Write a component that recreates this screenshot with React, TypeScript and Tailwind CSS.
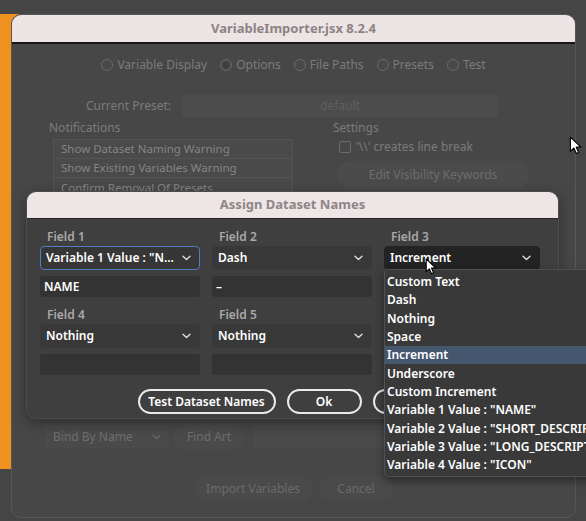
import React from "react";

const font = { fontFamily: '"Noto Sans", "Liberation Sans", sans-serif' };

function Chevron({ className = "" }: { className?: string }) {
  return (
    <svg width="9" height="6" viewBox="0 0 9 6" className={className}>
      <path d="M1 1.2 L4.5 4.6 L8 1.2" fill="none" stroke="currentColor" strokeWidth="1.4" strokeLinecap="round" strokeLinejoin="round" />
    </svg>
  );
}

function Radio({ label, checked }: { label: string; checked?: boolean }) {
  return (
    <div className="flex items-center gap-[4px]">
      <div className="w-[12px] h-[12px] rounded-full border border-[#6a6a6a] flex items-center justify-center bg-[#484848]">
        {checked && <div className="w-[6px] h-[6px] rounded-full bg-[#3c3c3c]" />}
      </div>
      <span>{label}</span>
    </div>
  );
}

function Cursor({ className = "", size = 18 }: { className?: string; size?: number }) {
  return (
    <svg width={size * 0.7} height={size} viewBox="0 0 12 18" className={className}>
      <path d="M1 1 L1 14.5 L4.3 11.4 L6.6 16.6 L8.8 15.6 L6.6 10.6 L11 10.6 Z" fill="#fff" stroke="#000" strokeWidth="1.1" strokeLinejoin="round" />
    </svg>
  );
}

function Field({
  label,
  value,
  input,
  variant,
}: {
  label: string;
  value: string;
  input: string;
  variant: "focus" | "normal" | "open";
}) {
  const selectCls =
    variant === "focus"
      ? "bg-[#363636] border-[1.5px] border-[#4d7fc2]"
      : variant === "open"
      ? "bg-[#232323] border border-[#232323]"
      : "bg-[#383838] border border-[#3a3a3a]";
  return (
    <div className="flex flex-col">
      <div className="h-[18px] flex items-center pl-[7px] text-[12px] font-semibold text-[#a9a9a9]">{label}</div>
      <div className={`h-[24px] rounded-[4px] flex items-center justify-between pl-[5px] pr-[8px] text-[12px] font-semibold text-white ${selectCls}`}>
        <span className="whitespace-nowrap">{value}</span>
        <Chevron className="text-[#dcdcdc]" />
      </div>
      <div className="mt-[6px] h-[21px] rounded-[3px] bg-[#333333] flex items-center pl-[4px] text-[12px] font-semibold text-white">
        {input}
      </div>
    </div>
  );
}

export default function App() {
  const items = [
    "Custom Text",
    "Dash",
    "Nothing",
    "Space",
    "Increment",
    "Underscore",
    "Custom Increment",
    'Variable 1 Value : "NAME"',
    'Variable 2 Value : "SHORT_DESCRIPT',
    'Variable 3 Value : "LONG_DESCRIPT',
    'Variable 4 Value : "ICON"',
  ];
  return (
    <div className="relative w-[586px] h-[521px] overflow-hidden bg-[#454545]" style={font}>
      {/* orange window behind */}
      <div className="absolute left-0 top-[14px] w-[30px] h-[455px] bg-[#ef911f] rounded-tr-[6px]" />

      {/* main window */}
      <div className="absolute left-[11px] top-[14px] w-[565px] h-[504px] rounded-[10px] bg-[#474747] border border-[#575757] overflow-hidden flex flex-col text-[12px] text-[#7b7b7b]">
        <div className="h-[29px] shrink-0 bg-[#ece4e5] border-b-2 border-[#161616] flex items-center justify-center text-[13px] font-bold text-[#8d8384]">
          VariableImporter.jsx 8.2.4
        </div>
        <div className="mt-[11px] h-[20px] flex items-center justify-center gap-[13px] text-[12px]">
          <Radio label="Variable Display" />
          <Radio label="Options" checked />
          <Radio label="File Paths" />
          <Radio label="Presets" />
          <Radio label="Test" />
        </div>
        <div className="mt-[20px] h-[22px] flex items-center">
          <div className="w-[159px] text-right">Current Preset:</div>
          <div className="ml-[11px] w-[316px] h-[22px] rounded-[2px] bg-[#4c4c4c] flex items-center justify-center text-[#5f5f5f]">
            default
          </div>
        </div>
        <div className="mt-[3px] flex gap-[25px] pl-[28px]">
          <div className="w-[265px] flex flex-col">
            <div className="h-[16px] pl-[9px] flex items-center">Notifications</div>
            <div className="mt-[3px] ml-[13px] w-[240px] border border-[#535353] bg-[#4a4a4a] text-[#858585] text-[11.5px]">
              <div className="h-[19px] flex items-center pl-[7px] border-b border-[#545454]">Show Dataset Naming Warning</div>
              <div className="h-[19px] flex items-center pl-[7px] border-b border-[#545454]">Show Existing Variables Warning</div>
              <div className="h-[19px] flex items-center pl-[7px]">Confirm Removal Of Presets</div>
            </div>
          </div>
          <div className="w-[230px] flex flex-col">
            <div className="h-[16px] pl-[3px] flex items-center">Settings</div>
            <div className="mt-[3px] ml-[9px] flex items-center gap-[5px] h-[16px]">
              <div className="w-[12px] h-[12px] rounded-[2px] border border-[#6a6a6a]" />
              <span>'\\' creates line break</span>
            </div>
            <div className="mt-[6px] ml-[7px] w-[192px] h-[28px] rounded-full bg-[#4b4b4b] flex items-center justify-center text-[#6d6d6d]">
              Edit Visibility Keywords
            </div>
          </div>
        </div>
        <div className="flex-1" />
        <div className="pl-[37px] h-[14px] flex items-end">Auto Binding</div>
        <div className="mt-[6px] pl-[33px] flex items-center gap-[4px]">
          <div className="w-[124px] h-[24px] rounded-[4px] bg-[#4a4a4a] flex items-center justify-between pl-[8px] pr-[8px] text-[#6e6e6e]">
            <span>Bind By Name</span>
            <Chevron className="text-[#666]" />
          </div>
          <div className="w-[72px] h-[26px] rounded-full bg-[#4a4a4a] flex items-center justify-center text-[#6e6e6e]">Find Art</div>
          <div className="ml-[4px] w-[200px] h-[24px] rounded-[3px] bg-[#4a4a4a]" />
        </div>
        <div className="mt-[26px] mb-[16px] flex justify-center gap-[6px] text-[#6a6a6a]">
          <div className="w-[119px] h-[25px] rounded-full bg-[#4a4a4a] flex items-center justify-center">Import Variables</div>
          <div className="w-[75px] h-[25px] rounded-full bg-[#4a4a4a] flex items-center justify-center">Cancel</div>
        </div>
      </div>

      {/* dialog */}
      <div className="absolute left-[26px] top-[191px] w-[533px] h-[228px] rounded-[10px] bg-[#3f3f3f] border border-[#4c4c4c] overflow-hidden flex flex-col shadow-[0_4px_14px_rgba(0,0,0,0.35)]">
        <div className="h-[27px] shrink-0 bg-[#ede5e6] border-b border-[#262626] flex items-center justify-center text-[13px] font-bold text-[#8f8586]">
          Assign Dataset Names
        </div>
        <div className="pt-[9px] pl-[13px] grid grid-cols-[160px_160px_156px] gap-x-[12px] gap-y-[9px]">
          <Field label="Field 1" value={'Variable 1 Value : "N...'} input="NAME" variant="focus" />
          <Field label="Field 2" value="Dash" input="–" variant="normal" />
          <Field label="Field 3" value="Increment" input="" variant="open" />
          <Field label="Field 4" value="Nothing" input="" variant="normal" />
          <Field label="Field 5" value="Nothing" input="" variant="normal" />
        </div>
        <div className="mt-[14px] flex justify-center gap-[11px] text-[12px] font-semibold text-white">
          <div className="w-[138px] h-[25px] rounded-full border-2 border-[#eaeaea] flex items-center justify-center">Test Dataset Names</div>
          <div className="w-[75px] h-[25px] rounded-full border-2 border-[#eaeaea] flex items-center justify-center">Ok</div>
          <div className="w-[75px] h-[25px] rounded-full border-2 border-[#eaeaea] flex items-center justify-center">Cancel</div>
        </div>
      </div>

      {/* dropdown menu */}
      <div className="absolute left-[384px] top-[269px] w-[215px] pt-[3px] pb-[2px] bg-[#393939] border border-[#505050] rounded-[4px] shadow-[0_4px_10px_rgba(0,0,0,0.4)] text-[12px] font-semibold text-white">
        {items.map((it) => (
          <div
            key={it}
            className={`h-[18.3px] flex items-center pl-[2px] whitespace-nowrap ${it === "Increment" ? "bg-[#45566f]" : ""}`}
          >
            {it}
          </div>
        ))}
      </div>

      {/* cursors */}
      <Cursor className="absolute left-[569px] top-[136px]" size={19} />
      <Cursor className="absolute left-[425px] top-[258px]" size={17} />
    </div>
  );
}
